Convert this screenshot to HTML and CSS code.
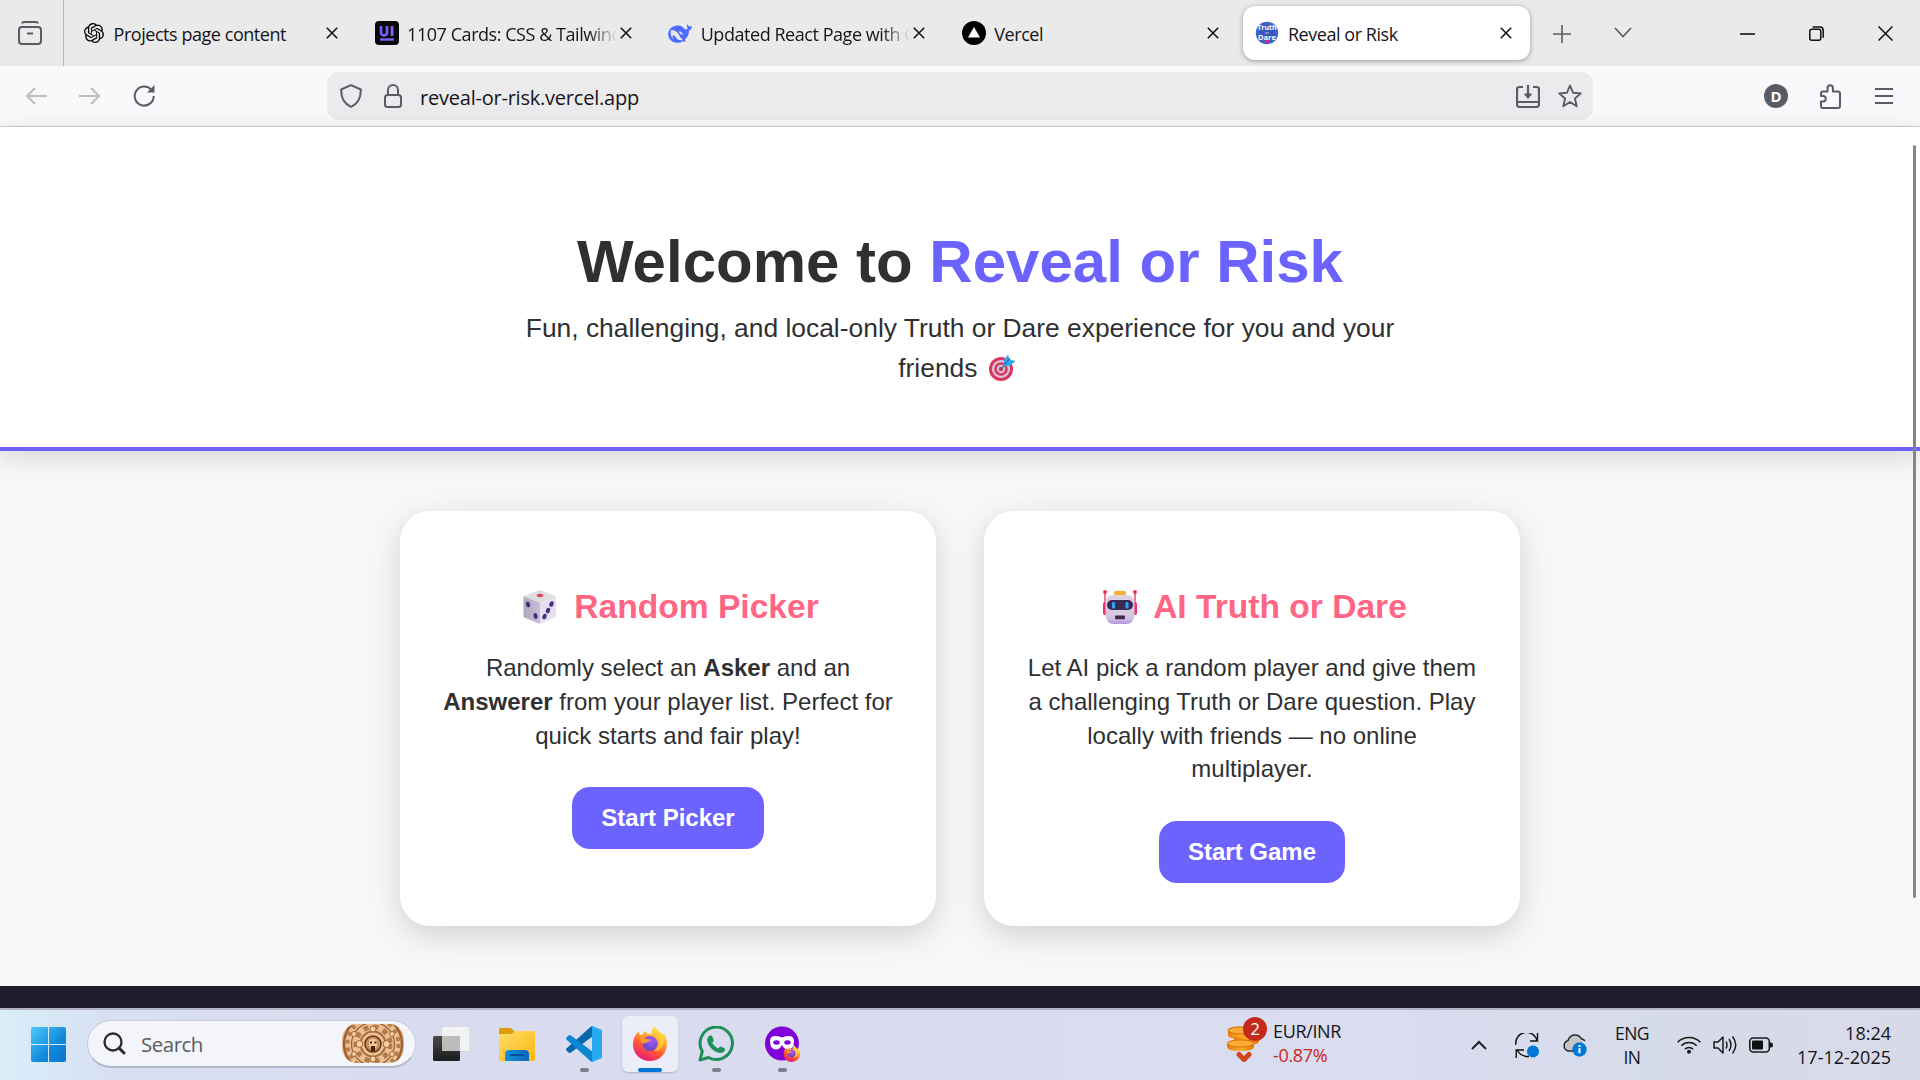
FILE: index.html
```html
<!DOCTYPE html>
<html lang="en">
<head>
<meta charset="utf-8">
<title>Reveal or Risk</title>
<link rel="stylesheet" href="styles.css">
</head>
<body>
<svg class="defs" width="0" height="0">
  <defs>
    <symbol id="x" viewBox="0 0 12 12"><path d="M.8.8l10.4 10.4M11.2.8.8 11.2" fill="none" stroke="#15141a" stroke-width="1.6"/></symbol>
    <linearGradient id="ffo" x1=".8" y1="0" x2=".3" y2="1"><stop offset="0" stop-color="#fff44f"/><stop offset=".35" stop-color="#ffb02a"/><stop offset=".65" stop-color="#ff5634"/><stop offset="1" stop-color="#e3187f"/></linearGradient>
    <radialGradient id="ffp" cx=".6" cy=".3" r=".8"><stop offset="0" stop-color="#a75cf5"/><stop offset="1" stop-color="#5b3fc4"/></radialGradient>
    <symbol id="firefox" viewBox="0 0 34 35">
      <path d="M22 0c-3 2.500-3.500 6-3 8h-3c-2-.5-3-1.200-4-3-1 .5-2 2-2 3.500l-3 .5C6 8 6 6.500 6 5.500 2 8.500 0 13 0 18.500 0 28 7.500 35 17 35s17-7.500 17-17c0-4.500-1.500-9-4-11.500.5 1.500.5 3 .3 3.500C28.500 5.500 23 5 22 0z" fill="url(#ffo)"/>
      <circle cx="17" cy="17.500" r="7.500" fill="url(#ffp)"/>
      <path d="M6 13c3-2 5-1.500 6.500-.3l5 .8c0 2-4 2-5 4 0 0-1.500-.5-3 0z" fill="#ff9a2e"/>
      <path d="M24 10c4 5 2 13-3.500 15 6 1 11-5 10-12-1-4-4-6-7-8-1 2-.8 3.500.5 5z" fill="#ffd23c" opacity=".75"/>
    </symbol>
  </defs>
</svg>

<header class="tabstrip">
  <div class="view-btn">
    <svg width="24" height="24" viewBox="0 0 24 24" fill="none" stroke="#5b5b66" stroke-width="2"><rect x="1" y="6" width="22" height="17" rx="3"/><path d="M4 2.500Q4.500 1 6 1h12q1.500 0 2 1.500M9 12.500h6"/></svg>
  </div>
  <div class="tab">
    <svg class="fav gpt" viewBox="0 0 24 24"><path d="M22.2819 9.8211a5.9847 5.9847 0 0 0-.5157-4.9108 6.0462 6.0462 0 0 0-6.5098-2.9A6.0651 6.0651 0 0 0 4.9807 4.1818a5.9847 5.9847 0 0 0-3.9977 2.9 6.0462 6.0462 0 0 0 .7427 7.0966 5.98 5.98 0 0 0 .511 4.9107 6.051 6.051 0 0 0 6.5146 2.9001A5.9847 5.9847 0 0 0 13.2599 24a6.0557 6.0557 0 0 0 5.7718-4.2058 5.9894 5.9894 0 0 0 3.9977-2.9001 6.0557 6.0557 0 0 0-.7475-7.0729zm-9.022 12.6081a4.4755 4.4755 0 0 1-2.8764-1.0408l.1419-.0804 4.7783-2.7582a.7948.7948 0 0 0 .3927-.6813v-6.7369l2.02 1.1686a.071.071 0 0 1 .038.0615v5.5826a4.504 4.504 0 0 1-4.4945 4.4944zm-9.6607-4.1254a4.4708 4.4708 0 0 1-.5346-3.0137l.142.0852 4.783 2.7582a.7712.7712 0 0 0 .7806 0l5.8428-3.3685v2.3324a.0804.0804 0 0 1-.0332.0615L9.74 19.9502a4.4992 4.4992 0 0 1-6.1408-1.6464zM2.3408 7.8956a4.485 4.485 0 0 1 2.3655-1.9728V11.6a.7664.7664 0 0 0 .3879.6765l5.8144 3.3543-2.0201 1.1685a.0757.0757 0 0 1-.071 0l-4.8303-2.7865A4.504 4.504 0 0 1 2.3408 7.872zm16.5963 3.8558L13.1038 8.364 15.1192 7.2a.0757.0757 0 0 1 .071 0l4.8303 2.7913a4.4944 4.4944 0 0 1-.6765 8.1042v-5.6772a.79.79 0 0 0-.407-.667zm2.0107-3.0231l-.142-.0852-4.7735-2.7818a.7759.7759 0 0 0-.7854 0L9.409 9.2297V6.8974a.0662.0662 0 0 1 .0284-.0615l4.8303-2.7866a4.4992 4.4992 0 0 1 6.6802 4.66zM8.3065 12.863l-2.02-1.1638a.0804.0804 0 0 1-.038-.0567V6.0742a4.4992 4.4992 0 0 1 7.3757-3.4537l-.142.0805L8.704 5.459a.7948.7948 0 0 0-.3927.6813zm1.0976-2.3654l2.602-1.4998 2.6069 1.4998v2.9994l-2.5974 1.4997-2.6067-1.4997Z"/></svg>
    <span class="label">Projects page content</span><svg class="close"><use href="#x"/></svg>
  </div>
  <div class="tab">
    <svg class="fav" viewBox="0 0 24 24"><rect width="24" height="24" rx="4" fill="#09090b"/><path d="M6 5v6.500a3 3 0 0 0 6 0V5" fill="none" stroke="#6a63ff" stroke-width="2.700"/><path d="M15.700 5h2.800v10h-2.800z" fill="#8b5ff6"/><path d="M5 17.300h14v2.400H5z" fill="#7a60f8"/></svg>
    <span class="label fade">1107 Cards: CSS &amp; Tailwind</span><svg class="close"><use href="#x"/></svg>
  </div>
  <div class="tab">
    <svg class="fav" viewBox="0 0 24 24"><path d="M23.800 5c-1 .8-1.800.4-2.600.2-1.200-.3-1.800-1.500-2-2.200-.8 1.500-.5 3 .7 4-1 1.200-1.600 1.800-2.500 1.500-2-1.500-3.200-3.500-5.400-3.800C6 3.200.2 7.500.2 13c0 5 4 8.800 9 8.800 2.600 0 4-.6 5.600-1.600 1.200.5 2.200.6 3.200 0-.8-.6-1-.9-1-1.600 2.800-2.800 4-5.500 4-9 2-.7 3-2.500 2.800-4.600z" fill="#4d6bfe"/><path d="M3 9c3.500-.5 6.500 2 8.300 5.500 1 2 2.400 3.300 3.500 4.500-3.800.8-6.300-1-7.600-3.600-.6-1.300-2-1.700-2.500-.7-.7 1.300 0 3 1.300 4.500C3.500 17 2 13 3 9z" fill="#eaeaeb"/><path d="M10.500 11c1.800-1.200 4 .4 4.300 3.300-1.600-.3-2.400-1.800-4.300-3.300z" fill="#eaeaeb"/></svg>
    <span class="label fade">Updated React Page with C</span><svg class="close"><use href="#x"/></svg>
  </div>
  <div class="tab">
    <svg class="fav" viewBox="0 0 24 24"><circle cx="12" cy="12" r="12"/><path d="M12 6l6 10.500H6z" fill="#fff"/></svg>
    <span class="label">Vercel</span><svg class="close"><use href="#x"/></svg>
  </div>
  <div class="tab active">
    <svg class="fav" viewBox="0 0 24 24"><circle cx="12" cy="12" r="11.200" fill="#3f63c9"/><circle cx="12" cy="12" r="8" fill="#3457bd"/><path d="M9.500 19.500q2.500-2 5 0l-2.500 3z" fill="#e0277c"/><text x="12" y="8.800" class="fv">Truth</text><text x="12" y="12.500" class="fv or">or</text><text x="12" y="18.600" class="fv big">Dare</text></svg>
    <span class="label">Reveal or Risk</span><svg class="close"><use href="#x"/></svg>
  </div>
  <svg class="plus" width="18" height="18" viewBox="0 0 18 18" stroke="#5b5b66" stroke-width="1.600"><path d="M9 0v18M0 9h18"/></svg>
  <svg class="chev" width="18" height="11" viewBox="0 0 18 11" fill="none" stroke="#5b5b66" stroke-width="1.700"><path d="M1 1l8 8.500L17 1"/></svg>
  <div class="winbtns">
    <svg width="15" height="15" viewBox="0 0 15 15" stroke="#111" stroke-width="1.600"><path d="M0 8h15"/></svg>
    <svg width="15" height="15" viewBox="0 0 15 15" fill="none" stroke="#111" stroke-width="1.500"><rect x=".8" y="3.200" width="11" height="11" rx="2"/><path d="M3.500 1h7.500q3.200 0 3.200 3.200v7.600"/></svg>
    <svg width="15" height="15" viewBox="0 0 15 15" stroke="#111" stroke-width="1.500"><path d="M.5.5l14 14M14.500.5l-14 14"/></svg>
  </div>
</header>

<nav class="toolbar">
  <div class="navbtns">
    <svg width="22" height="18" viewBox="0 0 22 18" fill="none" stroke="#bdbdc2" stroke-width="2"><path d="M22 9H2M10 1L2 9l8 8"/></svg>
    <svg width="22" height="18" viewBox="0 0 22 18" fill="none" stroke="#bdbdc2" stroke-width="2"><path d="M0 9h20M12 1l8 8-8 8"/></svg>
    <svg width="22" height="22" viewBox="0 0 22 22"><path d="M18.500 5A9.500 9.500 0 1 0 20.700 11" fill="none" stroke="#5b5b66" stroke-width="2"/><path d="M21.500 0v7.500H14z" fill="#5b5b66"/></svg>
  </div>
  <div class="urlbar">
    <svg width="22" height="24" viewBox="0 0 22 24" fill="none" stroke="#5b5b66" stroke-width="2"><path d="M11 1.200L20.800 5.500C21 14 17.500 20 11 22.800 4.500 20 1 14 1.200 5.500z" stroke-linejoin="round"/></svg>
    <svg class="lock" width="18" height="24" viewBox="0 0 18 24" fill="none" stroke="#5b5b66" stroke-width="2"><rect x="1" y="11" width="16" height="12" rx="2.500"/><path d="M4 11V6a5 5 0 0 1 10 0v5"/></svg>
    <span class="url">reveal-or-risk.vercel.app</span>
    <svg class="save" width="24" height="23" viewBox="0 0 24 23" fill="none" stroke="#5b5b66" stroke-width="2.200"><path d="M7 2H3.500Q1 2 1 4.500v15Q1 22 3.500 22h17q2.500 0 2.500-2.500v-15Q23 2 20.500 2H17M1 17h22M12 0v10"/><path d="M8.500 9h7L12 13.500z" fill="#5b5b66" stroke-width="1"/></svg>
    <svg class="star" width="24" height="24" viewBox="0 0 24 24" fill="none" stroke="#5b5b66" stroke-width="1.900" stroke-linejoin="round"><path d="M12 1.500l3 7.200 7.800.7-5.900 5.100 1.800 7.700L12 18l-6.700 4.200 1.800-7.700L1.200 9.400 9 8.700z"/></svg>
  </div>
  <span class="avatar">D</span>
  <svg class="ext" width="21" height="25" viewBox="0 0 21 25" fill="none" stroke="#5b5b66" stroke-width="2" stroke-linejoin="round"><path d="M1 12V9.500Q1 7.500 3 7.500h4.500V4a2.700 2.700 0 0 1 5.400 0v3.500H18q2 0 2 2V22q0 2-2 2H3q-2 0-2-2v-4.500h2a2.700 2.700 0 0 0 0-5.500z"/></svg>
  <svg class="menu" width="18" height="16" viewBox="0 0 18 16" stroke="#5b5b66" stroke-width="1.900"><path d="M0 1h18M0 8h18M0 15h18"/></svg>
</nav>

<main class="page">
  <section class="hero">
    <h1>Welcome to <span>Reveal or Risk</span></h1>
    <p>Fun, challenging, and local-only Truth or Dare experience for you and your<br>friends <svg class="dart" viewBox="0 0 27 27"><circle cx="12" cy="15" r="12" fill="#d9385f"/><circle cx="12" cy="15" r="9" fill="#dcc5e0"/><circle cx="12" cy="15" r="6.800" fill="#d9385f"/><circle cx="12" cy="15" r="4.200" fill="#dcc5e0"/><circle cx="12" cy="15" r="2.200" fill="#b93a66"/><path d="M12 15l7-7" stroke="#3d6f9e" stroke-width="1.500"/><path d="M14 12l1-6 4-5.500 1.500 5L26.500 7 21 12z" fill="#36a8ec"/><path d="M15 11l6-6.500" stroke="#1677c9" stroke-width="1.300"/></svg></p>
  </section>
  <section class="cards">
    <article class="card">
      <h2><svg class="emoji dice" viewBox="0 0 34 34"><defs><linearGradient id="dl"><stop offset="0" stop-color="#b0a8bb"/><stop offset="1" stop-color="#c9bcd9"/></linearGradient></defs><path d="M17 0.500L32 6.500 17 12 1 6.500z" fill="#dedede" stroke="#dedede" stroke-linejoin="round"/><path d="M.5 6.500L17 12.500V34L1.500 27.500Q.5 27 .5 26z" fill="url(#dl)"/><path d="M33 6.500L17 12.500V34l15-6.500q1-.5 1-1.500z" fill="#e6dff0"/><ellipse cx="17" cy="5.500" rx="3.300" ry="1.700" fill="#e0435f"/><g fill="#43307a"><ellipse cx="5" cy="14.500" rx="2" ry="2.900" transform="rotate(-15 5 14.500)"/><ellipse cx="12.500" cy="26" rx="2" ry="2.900" transform="rotate(-15 12.500 26)"/><ellipse cx="28.500" cy="14" rx="2" ry="2.900" transform="rotate(20 28.500 14)"/><ellipse cx="25" cy="20.500" rx="2" ry="2.900" transform="rotate(20 25 20.500)"/><ellipse cx="21.500" cy="26.500" rx="2" ry="2.900" transform="rotate(20 21.500 26.500)"/></g></svg>Random Picker</h2>
      <p>Randomly select an <b>Asker</b> and an<br><b>Answerer</b> from your player list. Perfect for<br>quick starts and fair play!</p>
      <a class="btn">Start Picker</a>
    </article>
    <article class="card">
      <h2><svg class="emoji robot" viewBox="0 0 34 34"><defs><linearGradient id="rb" x2="0" y2="1"><stop offset="0" stop-color="#ded3e6"/><stop offset=".8" stop-color="#d5c5e2"/><stop offset="1" stop-color="#b895dc"/></linearGradient></defs><path d="M2 2v14M32 2v14" stroke="#e0436a" stroke-width="1.400"/><circle cx="2" cy="2" r="1.900" fill="#ec2a5c"/><circle cx="32" cy="2" r="1.900" fill="#ec2a5c"/><rect x="0" y="12" width="5" height="13" rx="2" fill="#f0306a"/><rect x="29" y="12" width="5" height="13" rx="2" fill="#f0306a"/><rect x="11" y="1" width="12" height="6" rx="1.500" fill="#f2b02c"/><path d="M11 5h12q8.500 0 8.500 8v12q-1 9-8 9h-13q-7 0-8-9V13q0-8 8.500-8z" fill="url(#rb)"/><rect x="4" y="10" width="26" height="10" rx="5" fill="#3a2b55"/><rect x="9" y="12" width="3" height="6.500" rx="1.300" fill="#2fa5ee"/><rect x="22.500" y="12" width="3" height="6.500" rx="1.300" fill="#2fa5ee"/><rect x="12" y="25.500" width="10" height="3.700" rx="1" fill="#3a2b55"/></svg>AI Truth or Dare</h2>
      <p>Let AI pick a random player and give them<br>a challenging Truth or Dare question. Play<br>locally with friends — no online<br>multiplayer.</p>
      <a class="btn">Start Game</a>
    </article>
  </section>
  <div class="scrollbar"></div>
</main>
<div class="sitefoot"></div>

<footer class="taskbar">
  <svg class="start" width="35" height="35" viewBox="0 0 35 35"><defs><linearGradient id="wn" x2="1" y2="1"><stop offset="0" stop-color="#4cc8f8"/><stop offset=".6" stop-color="#128adb"/><stop offset="1" stop-color="#0a74d0"/></linearGradient></defs><path d="M2 0h15v17H0V2Q0 0 2 0zM18 0h15q2 0 2 2v15H18zM0 18h17v17H2q-2 0-2-2zM18 18h17v15q0 2-2 2H18z" fill="url(#wn)"/></svg>
  <div class="search">
    <svg width="23" height="23" viewBox="0 0 23 23" fill="none" stroke="#2b2b2b" stroke-width="2.300" stroke-linecap="round"><circle cx="10" cy="10" r="8.500"/><path d="M16 16l5 5" stroke-width="3"/></svg>
    <span>Search</span>
    <svg class="mayan" width="62" height="39" viewBox="0 0 62 39"><defs><clipPath id="mc"><rect width="62" height="39" rx="15"/></clipPath></defs><g clip-path="url(#mc)"><rect width="62" height="39" fill="#ecc092"/><g fill="none"><circle cx="31" cy="20" r="29" stroke="#9c6136" stroke-width="2.500"/><circle cx="31" cy="20" r="25.500" stroke="#b87e50" stroke-width="4" stroke-dasharray="4 4"/><circle cx="31" cy="20" r="21.500" stroke="#9a6238" stroke-width="1.300"/><circle cx="31" cy="20" r="17" stroke="#b37a4c" stroke-width="5" stroke-dasharray="5 5"/><circle cx="31" cy="20" r="12.500" stroke="#a26a40" stroke-width="2"/><circle cx="31" cy="20" r="8" fill="#c98e5c" stroke="#5e3418" stroke-width="1.500"/></g><g fill="#f6d0a2" stroke="#a0683c"><circle cx="17.500" cy="20" r="3.500"/><circle cx="44.500" cy="20" r="3.500"/><circle cx="31" cy="5" r="3"/><circle cx="31" cy="35" r="3"/><circle cx="12" cy="10" r="2.500"/><circle cx="50" cy="10" r="2.500"/><circle cx="12" cy="30" r="2.500"/><circle cx="50" cy="30" r="2.500"/></g><rect x="27" y="15" width="8" height="9" rx="3" fill="#f5c99b"/><path d="M28 17.500h2v2h-2zM32.500 17.500h2v2h-2zM29 22h4v5h-4z" fill="#4a2611"/></g></svg>
  </div>
  <svg class="tv" width="36" height="34" viewBox="0 0 36 34"><defs><linearGradient id="tk" x2="0" y2="1"><stop offset="0" stop-color="#4a4a4a"/><stop offset="1" stop-color="#1c1c1c"/></linearGradient></defs><rect y="9" width="27" height="25" rx="1.500" fill="url(#tk)"/><rect x="9" y="0" width="27" height="24" rx="1.500" fill="#f2f2f2"/><rect x="9" y="9" width="18" height="15" fill="#bcbcbc"/></svg>
  <svg class="ex" width="36" height="33" viewBox="0 0 36 33"><defs><linearGradient id="fo" x2="1" y2="1"><stop offset="0" stop-color="#ffdc6a"/><stop offset="1" stop-color="#fcb812"/></linearGradient><linearGradient id="fb" x2="1"><stop offset="0" stop-color="#1593dd"/><stop offset="1" stop-color="#0b66b8"/></linearGradient></defs><path d="M0 1.500Q0 0 1.500 0H11q1.500 0 2.500 1.500L15 3v5H0z" fill="#dd9d08"/><path d="M0 6h11q2 0 3.500-1.500L16 3h18.500Q36 3 36 4.500v27q0 1.500-1.500 1.500h-33Q0 33 0 31.500z" fill="url(#fo)"/><path d="M6 33v-7q0-4 4-4h16q4 0 4 4v7z" fill="url(#fb)"/><path d="M11 27h14" stroke="#074c93" stroke-width="1.800"/></svg>
  <div class="app vs"><svg width="36" height="36" viewBox="0 0 36 36"><path d="M27 0v10L5 26.500Q3.500 27.500 2 26L.5 24.500q-1-1.200.2-2.300L25 .6z" fill="#0668a9"/><path d="M27 36V26L5 9.500Q3.500 8.500 2 10L.5 11.500q-1 1.200.2 2.300L25 35.400z" fill="#0a87d2"/><path d="M26 0l9 3.500q1 .5 1 1.800v25.400q0 1.300-1 1.800L26 36z" fill="#27a8f2"/></svg></div>
  <div class="app ff"><svg width="34" height="35"><use href="#firefox"/></svg></div>
  <div class="app wa"><svg width="36" height="36" viewBox="0 0 36 36"><path d="M2 34l2.300-8.500A16.200 16.200 0 1 1 10.500 31.500z" fill="none" stroke="#1e8f5a" stroke-width="3" stroke-linejoin="round"/><path d="M12.500 9.500c1 0 1.500.3 2 1.500l1.200 3c.3.700 0 1.200-1.500 2.800 1.600 3 3.500 4.500 6.200 5.700 1.200-1.500 1.700-2.200 2.500-1.900l3.500 1.700c.8.400.7 1 .5 2-.7 2-2.500 2.700-4.500 2.700-5 0-12.500-6-13.200-12.500 0-2 1-4.800 3.300-5z" fill="#1e8f5a"/></svg></div>
  <div class="app pv"><svg width="35" height="36" viewBox="0 0 35 36"><circle cx="17" cy="17.500" r="17" fill="#8000d7"/><path d="M5 15q0-5 5.500-5 4 0 6.500 1.500Q19.500 10 23.500 10 29 10 29 15q0 8.500-6 8.500-3.500 0-6-4.500-2.500 4.500-6 4.500-6 0-6-8.500z" fill="#fff"/><ellipse cx="11.500" cy="16.500" rx="3.200" ry="2.200" fill="#8000d7"/><ellipse cx="22.500" cy="16.500" rx="3.200" ry="2.200" fill="#8000d7"/><use href="#firefox" x="18.500" y="19" width="16.500" height="17"/></svg></div>
  <div class="stocks">
    <svg width="40" height="46" viewBox="0 0 40 46"><defs><linearGradient id="cn"><stop offset="0" stop-color="#e87a08"/><stop offset=".5" stop-color="#ffae2e"/><stop offset="1" stop-color="#e67600"/></linearGradient></defs><g fill="url(#cn)"><path d="M1 15v4q0 4 12 4t12-4v-4z"/><ellipse cx="13" cy="14" rx="12" ry="3.500"/><path d="M7 21v4q0 4 12.500 4T32 25v-4z"/><path d="M0 27v4q0 4 13.500 4T27 31v-4z"/></g><g fill="#ffab33" stroke="#c66200" stroke-width=".8"><ellipse cx="13" cy="14.500" rx="12" ry="3.500"/><ellipse cx="13.500" cy="27.500" rx="13.500" ry="3.600"/></g><path d="M12 38.500l5 5 5-5" fill="none" stroke="#cf4514" stroke-width="5" stroke-linecap="round" stroke-linejoin="round"/></svg>
    <span class="badge">2</span>
    <div class="rates"><span>EUR/INR</span><span class="neg">-0.87%</span></div>
  </div>
  <div class="tray">
    <svg class="caret" width="16" height="10" viewBox="0 0 16 10" fill="none" stroke="#222" stroke-width="2"><path d="M1 9l7-7 7 7"/></svg>
    <svg class="sync" width="24" height="25" viewBox="0 0 24 25" fill="none" stroke="#111" stroke-width="1.400"><path d="M1 12A10.500 10.500 0 0 1 22 8M22.500 0v8H15M14 23.500Q6 24 2 17M1.200 25v-8H9"/><circle cx="18" cy="18.500" r="6" fill="#0078d7" stroke="none"/></svg>
    <svg class="cloud" width="25" height="23" viewBox="0 0 25 23"><path d="M14 17H6a5.500 5.500 0 0 1 0-10.500Q8 1 13 1q6 0 8 6z" fill="#c6c6c6"/><path d="M12 17H6a5.500 5.500 0 0 1 0-10.500Q8 1 13 1q4.500 0 6.500 4 2 0 3.500 2" fill="none" stroke="#2b2b2b" stroke-width="1.500"/><circle cx="17.500" cy="15.500" r="7.200" fill="#0078d7"/><path d="M17.500 14.300v5M17.500 11v1.900" stroke="#fff" stroke-width="2"/></svg>
    <div class="lang"><span>ENG</span><span>IN</span></div>
    <svg class="wifi" width="24" height="18" viewBox="0 0 24 18" fill="none" stroke="#1a1a1a" stroke-width="1.500"><path d="M.6 6.200a16 16 0 0 1 22.800 0M4.300 9.700a11 11 0 0 1 15.400 0M7.800 13.200a6 6 0 0 1 8.400 0"/><circle cx="12" cy="15.800" r="2" fill="#1a1a1a" stroke="none"/></svg>
    <svg class="vol" width="24" height="20" viewBox="0 0 24 20" fill="none" stroke="#1a1a1a" stroke-width="1.500"><path d="M1 7h4l5-5v16l-5-5H1z" stroke-linejoin="round"/><path d="M13 6.500q2 3.500 0 7M16 4q4 6 0 12M19.500 1.500q6.500 8.500 0 17"/></svg>
    <svg class="bat" width="24" height="16" viewBox="0 0 24 16"><rect x=".8" y="1" width="19.500" height="14" rx="3.500" fill="none" stroke="#1a1a1a" stroke-width="1.600"/><rect x="3" y="3.500" width="11" height="9" rx="1" fill="#111"/><path d="M20.500 5.500H22q2 0 2 2.500t-2 2.500h-1.500z" fill="#111"/></svg>
    <div class="clock"><span>18:24</span><span>17-12-2025</span></div>
  </div>
</footer>
</body>
</html>
```
FILE: styles.css
```css
* { box-sizing: border-box; }
body {
  margin: 0;
  width: 1920px;
  height: 1080px;
  overflow: hidden;
  display: flex;
  flex-direction: column;
  font-family: "Open Sans", "Noto Sans", sans-serif;
  color: #15141a;
}
svg { display: block; flex: none; }
.defs { position: absolute; }

/* tab strip */
.tabstrip {
  height: 66px;
  flex: none;
  background: #eaeaeb;
  display: flex;
  align-items: flex-start;
}
.view-btn {
  width: 64px;
  height: 66px;
  padding: 21px 0 0 18px;
  border-right: 1px solid #b5b5b8;
  margin-right: 5px;
}
.tab {
  width: 287px;
  height: 54px;
  margin: 6px 6.600px 0 0;
  padding: 0 18px 0 12px;
  display: flex;
  align-items: center;
  border-radius: 12px;
}
.tab.active {
  background: #fff;
  box-shadow: 0 1px 5px rgba(0, 0, 0, .35);
  margin-right: 23px;
}
.fav { width: 24px; height: 24px; }
.gpt { width: 20px; height: 20px; margin: 0 1px 0 3px; }
.label {
  flex: 1;
  margin-left: 8.500px;
  margin-right: 3px;
  padding-top: 1px;
  font-size: 18px;
  line-height: 26px;
  letter-spacing: -.45px;
  white-space: nowrap;
  overflow: hidden;
}
.fade {
  -webkit-mask-image: linear-gradient(90deg, #000 calc(100% - 28px), transparent);
  mask-image: linear-gradient(90deg, #000 calc(100% - 28px), transparent);
}
.close { width: 12px; height: 12px; }
.fv {
  font: bold 7px "Open Sans", sans-serif;
  fill: #fff;
  text-anchor: middle;
}
.fv.or { font-size: 4px; fill: #c3b0dd; }
.fv.big { font-size: 7.500px; }
.plus { margin-top: 25px; }
.chev { margin: 27px 0 0 43px; }
.winbtns {
  flex: 1;
  display: flex;
  justify-content: flex-end;
  gap: 54px;
  padding: 26px 27px 0 0;
}

/* toolbar */
.toolbar {
  height: 61px;
  flex: none;
  background: #f9f9fb;
  border-bottom: 1px solid #cbcbcd;
  display: flex;
  align-items: center;
}
.navbtns {
  width: 327px;
  padding-left: 25px;
  display: flex;
  align-items: center;
  gap: 32px;
}
.urlbar {
  width: 1266px;
  height: 48px;
  padding: 0 11px 0 13px;
  border-radius: 12px;
  background: #ebebed;
  display: flex;
  align-items: center;
}
.lock { margin-left: 22px; }
.url {
  flex: 1;
  margin-left: 18px;
  padding-top: 2px;
  font-size: 20px;
  letter-spacing: -.22px;
}
.star { margin-left: 18px; }
.avatar {
  width: 24px;
  height: 24px;
  margin-left: 171px;
  border-radius: 50%;
  background: #5b5b66;
  color: #fff;
  font-size: 15px;
  font-weight: 700;
  line-height: 24px;
  text-align: center;
}
.ext { margin-left: 32px; }
.menu { margin-left: 34px; }

/* page */
.page {
  position: relative;
  height: 859px;
  flex: none;
  background: #f7f7fa;
  font-family: "Liberation Sans", Arial, sans-serif;
  color: #2f3032;
  text-align: center;
  white-space: nowrap;
}
.hero {
  height: 324px;
  padding-top: 93px;
  background: #fff;
  border-bottom: 4px solid #6c63ff;
  box-shadow: 0 6px 24px rgba(0, 0, 0, .13);
}
.hero h1 {
  margin: 0;
  font-size: 60px;
  line-height: 84px;
}
.hero h1 span { color: #6c63ff; }
.hero p {
  margin: 4px 0 0;
  font-size: 26.400px;
  line-height: 40px;
}
.dart {
  display: inline-block;
  width: 27px;
  height: 27px;
  margin: 0 6px 0 4px;
  vertical-align: -4px;
}
.cards {
  display: flex;
  justify-content: center;
  gap: 48px;
  padding-top: 60px;
}
.card {
  width: 536px;
  height: 415px;
  padding-top: 72px;
  border-radius: 30px;
  background: #fff;
  box-shadow: 0 9px 30px rgba(0, 0, 0, .15);
}
.card h2 {
  display: flex;
  justify-content: center;
  align-items: center;
  margin: 0;
  font-size: 33.600px;
  line-height: 48px;
  color: #ff6584;
}
.emoji {
  width: 34px;
  height: 34px;
  margin: 0 16px 0 6px;
}
.dice { margin-right: 17px; }
.card p {
  margin: 20px 0 0;
  font-size: 24px;
  line-height: 33.800px;
}
.btn {
  display: inline-block;
  margin-top: 35px;
  padding: 0 29px;
  border-radius: 18px;
  background: #6c63ff;
  color: #fff;
  font-size: 24px;
  font-weight: 700;
  line-height: 62px;
}
.scrollbar {
  position: absolute;
  top: 18px;
  right: 4px;
  width: 3px;
  height: 753px;
  border-radius: 2px;
  background: #858585;
}
.sitefoot {
  height: 22px;
  flex: none;
  background: #1e1d2d;
}

/* taskbar */
.taskbar {
  height: 72px;
  flex: none;
  border-top: 2px solid #b2b3c3;
  background: linear-gradient(90deg, #d9eef9 0, #d8e0f1 110px, #d9dcee 400px, #dadcef 1400px, #d6dbe9 1650px, #d8dae8 1920px);
  display: flex;
  align-items: flex-start;
}
.start { margin: 17px 0 0 31px; }
.search {
  width: 329px;
  height: 48px;
  margin: 10px 0 0 21px;
  padding: 0 11px 0 15px;
  border: 1px solid #c9cddd;
  border-bottom: 2px solid #b1b7ca;
  border-radius: 24px;
  background: #f4f5fb;
  display: flex;
  align-items: center;
}
.search span {
  flex: 1;
  margin-left: 15px;
  padding-top: 1px;
  font-size: 20.500px;
  letter-spacing: -.5px;
  color: #5c5c61;
}
.tv { margin: 17px 0 0 17px; }
.ex { margin: 18px 0 0 30px; }
.app {
  width: 56px;
  height: 56px;
  margin: 6px 0 0 10px;
  display: flex;
  flex-direction: column;
  align-items: center;
  padding-top: 10px;
}
.app::after {
  content: "";
  width: 9px;
  height: 5px;
  margin-top: 6px;
  border-radius: 3px;
  background: #7d7f8a;
}
.vs { margin-left: 21px; }
.ff {
  border-radius: 6px;
  background: #ebeef8;
  box-shadow: 0 1px 2px rgba(90, 95, 130, .35);
}
.ff::after { width: 24px; margin-top: 7px; background: #0078d7; }
.pv svg { margin-left: 1px; }
.stocks {
  position: relative;
  display: flex;
  margin: 6px 0 0 417px;
  width: 150px;
}
.badge {
  position: absolute;
  left: 16px;
  top: 1px;
  width: 24px;
  height: 24px;
  border-radius: 50%;
  background: #c42b1c;
  color: #fff;
  font-size: 17px;
  line-height: 24px;
  text-align: center;
}
.rates, .lang, .clock {
  display: flex;
  flex-direction: column;
  font-size: 18px;
  line-height: 24px;
  white-space: nowrap;
}
.rates { margin: 3px 0 0 6px; letter-spacing: -.35px; }
.neg { color: #c8281e; }
.tray {
  flex: 1;
  height: 70px;
  display: flex;
  align-items: center;
  justify-content: flex-end;
  padding-right: 29px;
}
.sync { margin-left: 28px; }
.cloud { margin-left: 23px; }
.lang {
  width: 50px;
  margin-left: 20px;
  align-items: center;
  font-size: 17.500px;
  letter-spacing: -.5px;
}
.wifi { margin-left: 20px; }
.vol { margin-left: 12px; }
.bat { margin-left: 12px; }
.clock { width: 118px; align-items: flex-end; margin-top: -1px; }
```
